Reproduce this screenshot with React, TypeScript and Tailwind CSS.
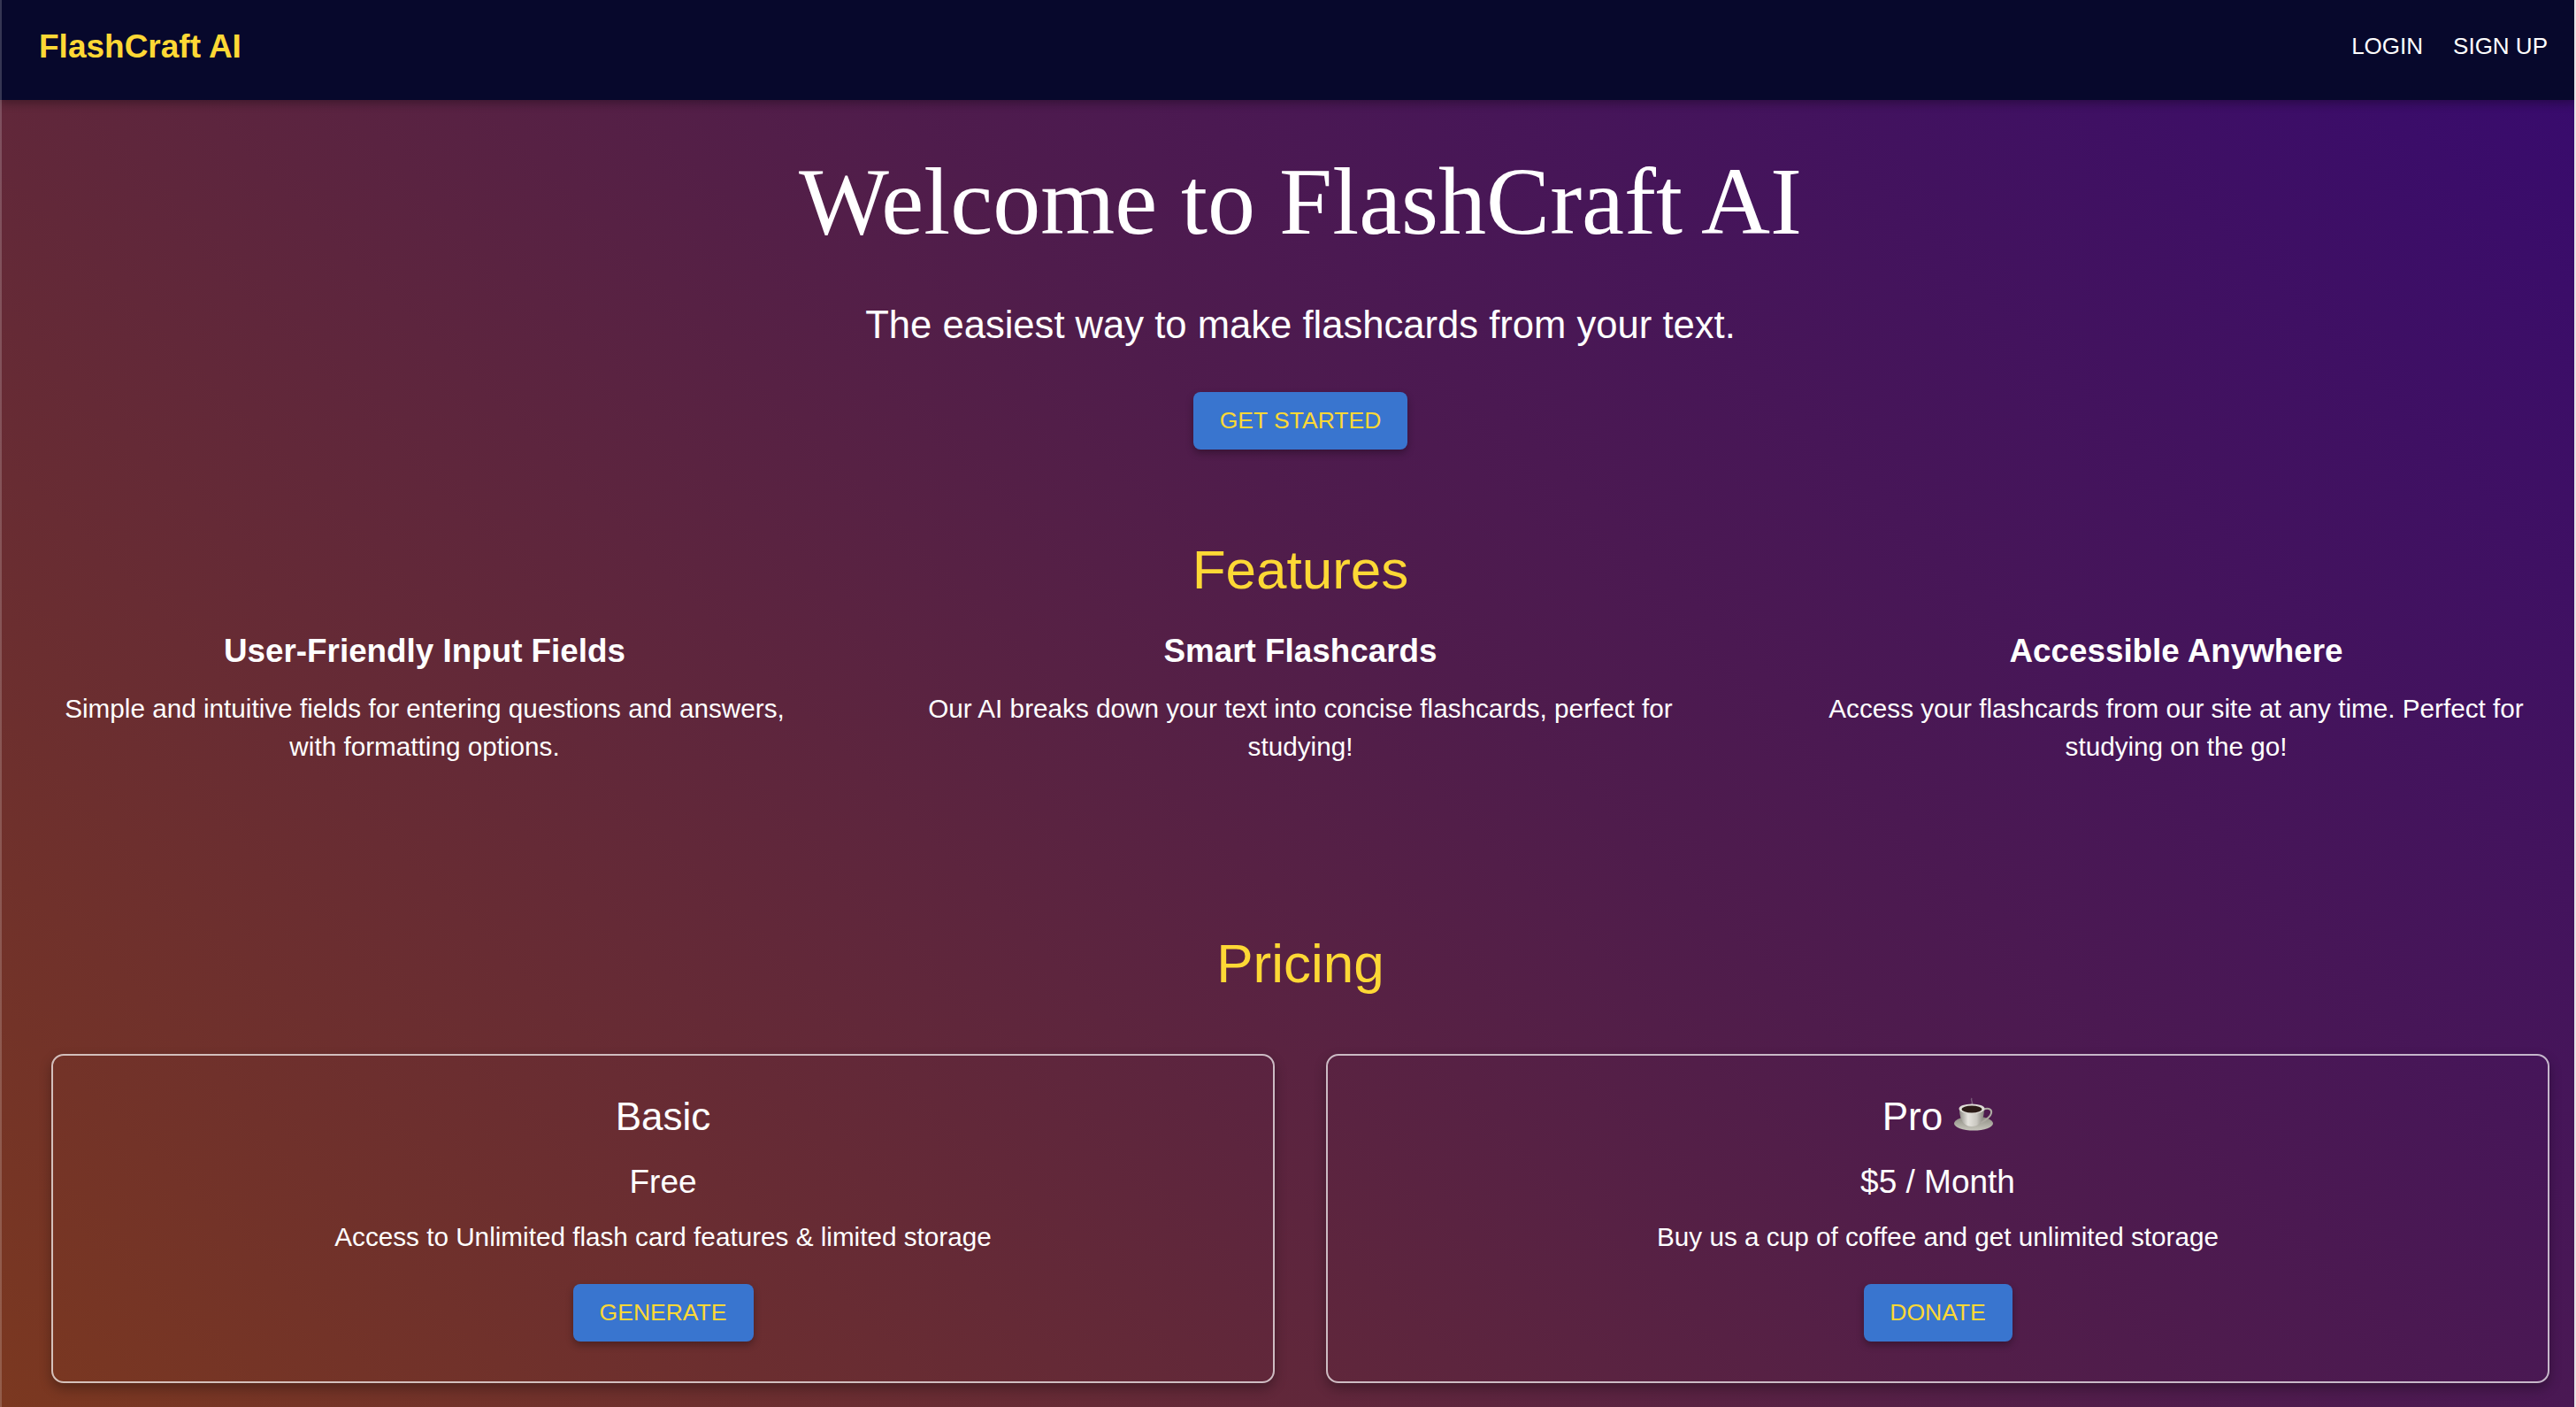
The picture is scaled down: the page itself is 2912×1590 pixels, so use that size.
const sans = "font-['Liberation_Sans',Arial,sans-serif]";

const features = [
  {
    title: 'User-Friendly Input Fields',
    text: 'Simple and intuitive fields for entering questions and answers, with formatting options.',
  },
  {
    title: 'Smart Flashcards',
    text: 'Our AI breaks down your text into concise flashcards, perfect for studying!',
  },
  {
    title: 'Accessible Anywhere',
    text: 'Access your flashcards from our site at any time. Perfect for studying on the go!',
  },
];

const CoffeeCup = () => (
  <svg viewBox="0 0 44 38" className="ml-[13px] inline-block h-[38px] w-[44px] align-[-1px]">
    <defs>
      <linearGradient id="cupBody" x1="0" x2="1" y1="0" y2="0">
        <stop offset="0" stopColor="#8f8d86" />
        <stop offset="0.35" stopColor="#e6e4de" />
        <stop offset="0.7" stopColor="#c9c7c0" />
        <stop offset="1" stopColor="#85837c" />
      </linearGradient>
      <linearGradient id="cupPlate" x1="0" x2="0" y1="0" y2="1">
        <stop offset="0" stopColor="#8b8a80" />
        <stop offset="1" stopColor="#c8c7bd" />
      </linearGradient>
    </defs>
    <path d="M20 1c-2 3 2 4 0 7" fill="none" stroke="#9a8d97" strokeWidth="1.5" opacity="0.55" />
    <ellipse cx="22" cy="29.5" rx="22" ry="8" fill="url(#cupPlate)" />
    <path d="M33 14c6-3 10 0 9 4-1 5-7 8-12 11" fill="none" stroke="#aeaba3" strokeWidth="2" />
    <path d="M6 13c0 11 4 20 14 20s14-9 14-20z" fill="url(#cupBody)" />
    <ellipse cx="20" cy="13" rx="14.5" ry="5.5" fill="#dedcd6" />
    <ellipse cx="20" cy="13.5" rx="11.5" ry="4" fill="#2b1b16" />
  </svg>
);

const CtaButton = ({ label, className }: { label: string; className: string }) => (
  <button
    className={`h-[65px] rounded-lg bg-[#3975cf] text-[26.5px] text-[#fdd835] shadow-[0_4px_8px_rgba(0,0,0,0.3)] ${className}`}
  >
    {label}
  </button>
);

const PriceCard = ({
  name,
  price,
  text,
  action,
  width,
  cup,
}: {
  name: string;
  price: string;
  text: string;
  action: string;
  width: string;
  cup?: boolean;
}) => (
  <div className="flex h-[372px] flex-col items-center rounded-[14px] border-2 border-[#ffffffb0] pt-[34px] text-center text-white shadow-[0_6px_14px_rgba(0,0,0,0.3)]">
    <h3 className="text-[44px] leading-[70px]">
      {name}
      {cup && <CoffeeCup />}
    </h3>
    <p className="mt-[8px] text-[37px] leading-[62px]">{price}</p>
    <p className="mt-[8px] text-[29.7px] leading-[46px]">{text}</p>
    <CtaButton label={action} className={`mt-[30px] ${width}`} />
  </div>
);

export default function App() {
  return (
    <div className={`relative h-[1590px] w-[2912px] overflow-hidden bg-[linear-gradient(45deg,#7b3820_0%,#4f1c4c_55%,#370a6f_100%)] ${sans}`}>
      <nav className="relative flex h-[113px] items-center justify-between bg-[#07082c] pb-[8px] pl-[44px] pr-[32px] shadow-[0_4px_10px_rgba(0,0,0,0.3)]">
        <span className="text-[37px] font-bold text-[#fdd835]">FlashCraft AI</span>
        <div className="flex gap-[34px] text-[26px] text-white">
          <a>LOGIN</a>
          <a>SIGN UP</a>
        </div>
      </nav>

      <main className="pl-[58px] pr-[30px]">
        <section className="flex flex-col items-center pt-[40px] text-white">
          <h1 className="font-['Liberation_Serif','Times_New_Roman',serif] text-[108px] leading-[150px]">
            Welcome to FlashCraft AI
          </h1>
          <p className="mt-[32px] text-[43.6px] leading-[64px]">The easiest way to make flashcards from your text.</p>
          <CtaButton label="GET STARTED" className="mt-[44px] w-[242px]" />
        </section>

        <section className="mt-[99px]">
          <h2 className="text-center text-[62px] leading-[74px] text-[#fdd835]">Features</h2>
          <div className="mx-[-8px] mt-[26px] grid grid-cols-3 gap-x-[130px] text-center text-white">
            {features.map((feature) => (
              <div key={feature.title}>
                <h3 className="text-[36.8px] font-bold leading-[58px]">{feature.title}</h3>
                <p className="mt-[14px] text-[29.7px] leading-[43px]">{feature.text}</p>
              </div>
            ))}
          </div>
        </section>

        <h2 className="mt-[187px] text-center text-[62px] leading-[74px] text-[#fdd835]">Pricing</h2>

        <section className="mt-[65px] grid grid-cols-2 gap-x-[58px]">
          <PriceCard
            name="Basic"
            price="Free"
            text="Access to Unlimited flash card features & limited storage"
            action="GENERATE"
            width="w-[204px]"
          />
          <PriceCard
            name="Pro"
            cup
            price="$5 / Month"
            text="Buy us a cup of coffee and get unlimited storage"
            action="DONATE"
            width="w-[168px]"
          />
        </section>
      </main>

      <div className="absolute inset-y-0 left-0 w-[2px] bg-[#ffffff30]" />
      <div className="absolute inset-y-0 right-0 w-[2px] bg-[#e4e4e4]" />
    </div>
  );
}
